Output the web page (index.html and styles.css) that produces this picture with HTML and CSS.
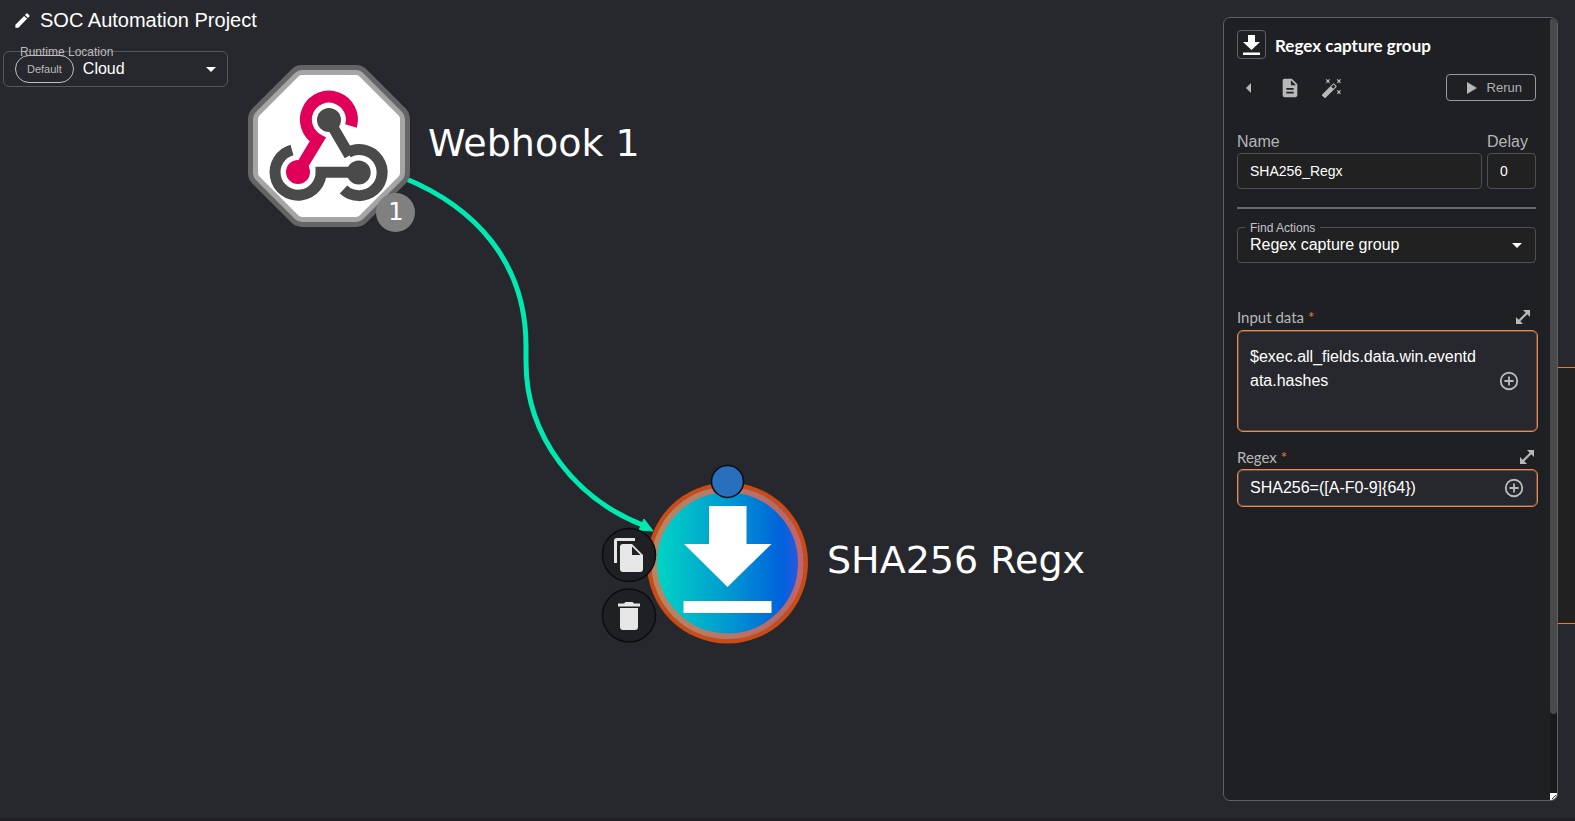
FILE: index.html
```html
<!DOCTYPE html>
<html lang="en">
<head>
<meta charset="utf-8">
<title>SOC Automation Project</title>
<link rel="stylesheet" href="styles.css">
</head>
<body>
<main class="workspace">
  <svg class="graph" role="img" aria-label="Workflow graph">
    <defs>
      <linearGradient id="node-fill" gradientUnits="userSpaceOnUse" x1="657" y1="0" x2="799" y2="0">
        <stop offset="0" stop-color="#00d4c4"/>
        <stop offset=".5" stop-color="#0099d0"/>
        <stop offset=".88" stop-color="#0062dc"/>
        <stop offset="1" stop-color="#2a58e0"/>
      </linearGradient>
    </defs>
    <path class="edge" d="M404 178C475 207 526 262 526 346V362C526 438 577 500 645 526"/>
    <path class="edge-head" d="M653 531L639 530L644 519Z"/>

    <g stroke-linejoin="round">
      <path d="M302 80H356L395 119V173L356 212H302L263 173V119Z" fill="#656565" stroke="#656565" stroke-width="30"/>
      <path d="M302 80H356L395 119V173L356 212H302L263 173V119Z" fill="#a5a5a5" stroke="#a5a5a5" stroke-width="20"/>
      <path d="M302 80H356L395 119V173L356 212H302L263 173V119Z" fill="#fff" stroke="#fff" stroke-width="10"/>
    </g>
    <g fill="none" stroke-width="11">
      <path stroke="#e0005a" stroke-width="12" d="M351 126A23 23 0 1 0 317.700 139.700L303 164"/>
      <path stroke="#4a4a4a" d="M292 150A23 23 0 1 0 321 171M315.500 172.300H358M334 129L349.500 155.500M348 152.500A23 23 0 1 1 343.500 189.500"/>
    </g>
    <circle cx="329" cy="120" r="12" fill="#4a4a4a"/>
    <circle cx="298" cy="172" r="12" fill="#e0005a"/>
    <circle cx="358.700" cy="172.500" r="12" fill="#4a4a4a"/>
    <circle cx="395.500" cy="212.500" r="19.500" fill="#808080"/>
    <text class="badge-text" x="396" y="220">1</text>
    <text class="node-label" x="428" y="156">Webhook 1</text>

    <circle cx="727.500" cy="563" r="80.500" fill="#c94c17"/>
    <circle cx="727.500" cy="563" r="76" fill="url(#node-fill)"/>
    <circle cx="727.500" cy="563" r="73.250" fill="none" stroke="#f46b43" stroke-opacity=".75" stroke-width="5.500"/>
    <path fill="#fff" d="M709 506H746.500V544H771.500L727.500 587L684 544H709ZM683.500 601H771.500V613H683.500Z"/>
    <circle cx="727.500" cy="481.500" r="16" fill="#2870bd" stroke="#080c12" stroke-width="1.500"/>
    <g class="node-tool">
      <circle cx="629" cy="555" r="26.500"/>
      <circle cx="629" cy="615.500" r="26.500"/>
    </g>
    <path fill="#e6e6e6" d="M635 538V541H617V563H614V541Q614 538 617 538ZM623 544H632L643 555V569Q643 572 640 572H623Q620 572 620 569V547Q620 544 623 544ZM632 546.500V555H640.500Z"/>
    <path fill="#e6e6e6" d="M618 603.500H624L625.500 602H632.500L634 603.500H640V606.500H618ZM620 608H638V627Q638 630 635 630H623Q620 630 620 627Z"/>
    <text class="node-label" x="827" y="573">SHA256 Regx</text>
  </svg>

  <div class="preview"></div>

  <header class="toolbar">
    <h1 class="title">
      <svg class="pencil" viewBox="0 0 24 24"><path d="M3 17.250V21h3.750L17.810 9.940l-3.750-3.750zM20.710 7.040a1 1 0 0 0 0-1.410l-2.340-2.340a1 1 0 0 0-1.410 0l-1.830 1.830 3.750 3.750z"/></svg>
      SOC Automation Project
    </h1>
    <div class="location">
      <label class="location-label" for="loc">Runtime Location</label>
      <span class="chip">Default</span>
      <select id="loc" class="picker"><option>Cloud</option></select>
      <svg class="caret" viewBox="0 0 10 5"><path d="M0 0h10L5 5z"/></svg>
    </div>
  </header>

  <aside class="panel">
    <div class="content">
      <div class="heading">
        <span class="app-icon"><svg viewBox="0 0 17 20"><path d="M5 0h7v7h5l-8.500 8L0 7h5zM0 17.500h17v2.500H0z"/></svg></span>
        <h2>Regex capture group</h2>
      </div>
      <div class="actions">
        <button class="icon-btn" aria-label="Back"><svg class="icon-back" viewBox="0 0 5 10"><path d="M5 0v10L0 5z"/></svg></button>
        <button class="icon-btn" aria-label="Documentation"><svg class="icon" viewBox="0 0 24 24"><path d="M14 2H6c-1.100 0-2 .9-2 2v16c0 1.100.9 2 2 2h12c1.100 0 2-.9 2-2V8zm2 16H8v-2h8zm0-4H8v-2h8zm-3-5V3.500L18.500 9z"/></svg></button>
        <button class="icon-btn" aria-label="Autocomplete"><svg class="icon" viewBox="0 0 24 24"><path d="M7.500 5.600 10 7 8.600 4.500 10 2 7.500 3.400 5 2l1.400 2.500L5 7zm12 9.800L17 14l1.400 2.500L17 19l2.500-1.400L22 19l-1.400-2.500L22 14zM22 2l-2.500 1.400L17 2l1.400 2.500L17 7l2.500-1.400L22 7l-1.400-2.500zm-7.630 5.290a1 1 0 0 0-1.410 0L1.290 18.960a1 1 0 0 0 0 1.410l2.340 2.340c.39.39 1.020.39 1.410 0L16.700 11.050a1 1 0 0 0 0-1.410zm-1.030 5.490-2.120-2.120 2.440-2.440 2.120 2.120z"/></svg></button>
        <button class="rerun"><svg viewBox="0 0 10 12"><path d="M0 0l10 6-10 6z"/></svg>Rerun</button>
      </div>
      <div class="fields">
        <div class="field grow"><label for="name">Name</label><input id="name" value="SHA256_Regx"></div>
        <div class="field delay"><label for="delay">Delay</label><input id="delay" value="0"></div>
      </div>
      <hr>
      <div class="finder">
        <label for="action">Find Actions</label>
        <select id="action" class="picker"><option>Regex capture group</option></select>
        <svg class="caret" viewBox="0 0 10 5"><path d="M0 0h10L5 5z"/></svg>
      </div>
      <div class="param">
        <div class="param-head">
          <label for="data">Input data <b>*</b></label>
          <button class="icon-btn expand" aria-label="Expand input data"><svg viewBox="0 0 14 14"><path d="M7 0h7v7l-2.700-2.700-7 7L7 14H0V7l2.700 2.700 7-7z"/></svg></button>
        </div>
        <div class="box tall">
          <textarea id="data" rows="3">$exec.all_fields.data.win.eventdata.hashes</textarea>
          <button class="icon-btn" aria-label="Add to input data"><svg class="plus" viewBox="0 0 24 24"><path d="M13 7h-2v4H7v2h4v4h2v-4h4v-2h-4zm-1-5a10 10 0 1 0 0 20 10 10 0 0 0 0-20zm0 18a8 8 0 1 1 0-16 8 8 0 0 1 0 16z"/></svg></button>
        </div>
      </div>
      <div class="param second">
        <div class="param-head">
          <label for="regex">Regex <b>*</b></label>
          <button class="icon-btn expand" aria-label="Expand regex"><svg viewBox="0 0 14 14"><path d="M7 0h7v7l-2.700-2.700-7 7L7 14H0V7l2.700 2.700 7-7z"/></svg></button>
        </div>
        <div class="box">
          <input id="regex" value="SHA256=([A-F0-9]{64})">
          <button class="icon-btn" aria-label="Add to regex"><svg class="plus" viewBox="0 0 24 24"><path d="M13 7h-2v4H7v2h4v4h2v-4h4v-2h-4zm-1-5a10 10 0 1 0 0 20 10 10 0 0 0 0-20zm0 18a8 8 0 1 1 0-16 8 8 0 0 1 0 16z"/></svg></button>
        </div>
      </div>
    </div>
    <div class="track">
      <div class="thumb"></div>
      <svg class="grip" viewBox="0 0 7 7"><path d="M6 2L2 6M6 4.500L4.500 6"/></svg>
    </div>
  </aside>
</main>
</body>
</html>
```
FILE: styles.css
```css
* { box-sizing: border-box; }

body {
  margin: 0;
  background: #27282d;
  color: #fff;
  font-family: "Liberation Sans", Arial, sans-serif;
}

button, input, textarea, select { font: inherit; color: inherit; }

.workspace {
  position: relative;
  min-height: 100vh;
  overflow: hidden;
  border-bottom: 3px solid #241e26;
}

.graph { position: absolute; inset: 0; width: 100%; height: 100%; }
.edge { fill: none; stroke: #00e9b0; stroke-width: 5; }
.edge-head { fill: #00e9b0; stroke: #00e9b0; }
.node-label { fill: #fff; font: 38px "DejaVu Sans", sans-serif; }
.badge-text { fill: #fff; font: 24px "DejaVu Sans", sans-serif; text-anchor: middle; }
.node-tool { fill: #1f2024; stroke: #0b0c0e; stroke-width: 1.5; }

.preview {
  position: absolute;
  top: 367px;
  right: 0;
  width: 100px;
  height: 257px;
  background: #212121;
  border: solid #f07a2c;
  border-width: 1px 0;
}

.toolbar { position: relative; width: 228px; padding: 8px 0 0 3px; }

.title {
  display: flex;
  align-items: center;
  gap: 8px;
  margin: 0 0 19px 10px;
  font-size: 20px;
  font-weight: 400;
  line-height: 24px;
  white-space: nowrap;
}
.pencil { flex: none; width: 19px; height: 19px; fill: #fff; }

.location {
  position: relative;
  display: flex;
  align-items: center;
  height: 36px;
  padding: 0 11px;
  border: 1px solid #55565a;
  border-radius: 6px;
}
.location-label {
  position: absolute;
  top: -8px;
  left: 16px;
  color: #bbb;
  font-size: 12px;
  line-height: 16px;
}
.chip {
  padding: 0 11px;
  border: 1px solid #c0c0c0;
  border-radius: 14px;
  color: #bbb;
  font-size: 11px;
  line-height: 26px;
}
.picker {
  flex: 1;
  min-width: 0;
  padding: 0 0 2px;
  border: 0;
  appearance: none;
  background: none;
  font-size: 16px;
}
.location .picker { margin-left: 9px; }
.caret { width: 10px; height: 5px; fill: #fff; }

.panel {
  position: absolute;
  top: 17px;
  right: 17px;
  bottom: 17px;
  display: flex;
  width: 335px;
  overflow: hidden;
  background: #1f2024;
  border: 1px solid #5f6165;
  border-radius: 7px;
}
.content { flex: 1; min-width: 0; padding: 12px 14px 0 13px; }

.track {
  display: flex;
  flex-direction: column;
  justify-content: space-between;
  width: 7px;
  background: #1b1a1b;
}
.thumb { height: 89%; background: #4a4a4a; border-radius: 4px; }
.grip { width: 7px; height: 7px; background: #fff; fill: none; stroke: #444; }

.heading { display: flex; align-items: center; gap: 9px; }
.heading h2 {
  margin: 0;
  padding-top: 2px;
  font: 700 17px/24px Lato, sans-serif;
}
.app-icon {
  display: grid;
  place-items: center;
  width: 29px;
  height: 29px;
  border: 1px solid #5f6165;
  border-radius: 4px;
}
.app-icon svg { width: 17px; height: 20px; fill: #fff; }

.icon-btn {
  display: grid;
  place-items: center;
  padding: 0;
  border: 0;
  background: none;
  fill: #b8b8b8;
}
.actions { display: flex; align-items: center; gap: 20px; margin-top: 15px; }
.actions .icon-btn { width: 22px; height: 24px; }
.icon { width: 22px; height: 22px; }
.icon-back { width: 5px; height: 10px; }
.rerun {
  display: flex;
  align-items: center;
  gap: 10px;
  height: 27px;
  margin-left: auto;
  padding: 0 13px 0 20px;
  border: 1px solid #9a9a9a;
  border-radius: 4px;
  background: none;
  color: #b0b0b0;
  font-size: 13px;
  fill: #b8b8b8;
}
.rerun svg { width: 10px; height: 12px; }

.fields { display: flex; gap: 5px; margin-top: 30px; }
.field { display: flex; flex-direction: column; }
.field label { color: #b5b5b5; font-size: 16px; line-height: 22px; }
.field input {
  width: 100%;
  height: 36px;
  padding: 0 12px 1px;
  border: 1px solid #505050;
  border-radius: 4px;
  background: #212121;
  font-size: 14px;
}
.grow { flex: 1; }
.delay { width: 49px; }

hr { height: 2px; margin: 18px 0; border: 0; background: #66696c; }

.finder {
  position: relative;
  display: flex;
  align-items: center;
  height: 36px;
  padding: 0 13px 0 12px;
  border: 1px solid #505050;
  border-radius: 4px;
  background: #212121;
}
.finder label {
  position: absolute;
  top: -7px;
  left: 7px;
  padding: 0 5px;
  background: #1f2024;
  color: #c4c4c4;
  font-size: 12px;
  line-height: 14px;
}

.param { margin: 43px -2px 0 0; }
.param.second { margin-top: 15px; }
.param-head {
  display: flex;
  align-items: center;
  justify-content: space-between;
  height: 20px;
  margin-bottom: 2px;
  padding-right: 4px;
}
.param:not(.second) .param-head { height: 22px; padding-right: 8px; }
.param-head label { color: #b8b8b8; font: 15px/20px Lato, sans-serif; }
.param-head b { color: #f07a2c; font-weight: 400; }
.expand svg { width: 14px; height: 14px; }

.box {
  display: flex;
  align-items: center;
  padding: 0 12px;
  height: 38px;
  border: 1px solid #ff8533;
  border-radius: 6px;
  background: #27282d;
  box-shadow: inset 0 0 0 1px #55565a;
  font-size: 16px;
}
.box.tall { height: 102px; padding-right: 17px; }
.box input, .box textarea {
  flex: 1;
  min-width: 0;
  padding: 0;
  border: 0;
  background: none;
  resize: none;
  overflow: hidden;
}
.box textarea { height: 72px; margin-right: 16px; line-height: 24px; word-break: break-all; }
.plus { width: 22px; height: 22px; }
```
